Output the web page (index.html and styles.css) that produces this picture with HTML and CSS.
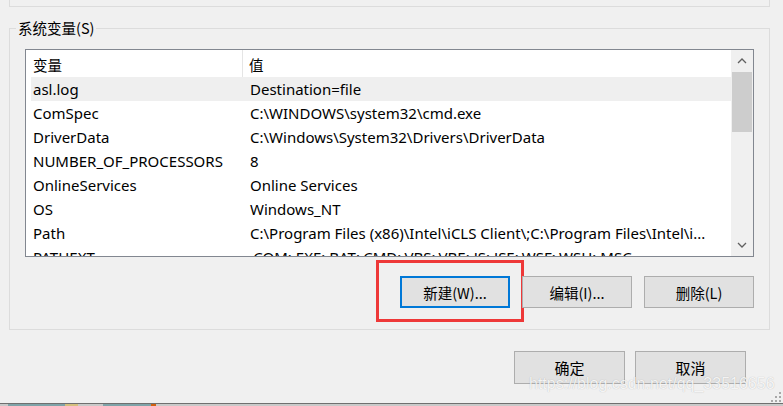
FILE: index.html
```html
<!DOCTYPE html>
<html>
<head>
<meta charset="utf-8">
<link rel="stylesheet" href="styles.css">
</head>
<body>
<div class="page">
  <div class="topbox"></div>
  <div class="group">
    <div class="legend">系统变量(S)</div>
    <div class="list">
      <div class="list-main">
        <div class="hdr"><div class="hc1">变量</div><div class="hc2">值</div></div>
        <div class="row sel"><div class="c1">asl.log</div><div class="c2">Destination=file</div></div>
        <div class="row"><div class="c1">ComSpec</div><div class="c2">C:\WINDOWS\system32\cmd.exe</div></div>
        <div class="row"><div class="c1">DriverData</div><div class="c2">C:\Windows\System32\Drivers\DriverData</div></div>
        <div class="row"><div class="c1">NUMBER_OF_PROCESSORS</div><div class="c2">8</div></div>
        <div class="row"><div class="c1">OnlineServices</div><div class="c2">Online Services</div></div>
        <div class="row"><div class="c1">OS</div><div class="c2">Windows_NT</div></div>
        <div class="row"><div class="c1">Path</div><div class="c2">C:\Program Files (x86)\Intel\iCLS Client\;C:\Program Files\Intel\i...</div></div>
        <div class="row"><div class="c1">PATHEXT</div><div class="c2">.COM;.EXE;.BAT;.CMD;.VBS;.VBE;.JS;.JSE;.WSF;.WSH;.MSC</div></div>
      </div>
      <div class="vscroll">
        <div class="sb-btn"><svg width="10" height="6" viewBox="0 0 10 6"><polyline points="1,5 5,1 9,5" fill="none" stroke="#606060" stroke-width="1.3"/></svg></div>
        <div class="thumb"></div>
        <div class="track"></div>
        <div class="sb-btn"><svg width="10" height="6" viewBox="0 0 10 6"><polyline points="1,1 5,5 9,1" fill="none" stroke="#606060" stroke-width="1.3"/></svg></div>
      </div>
    </div>
    <div class="btns">
      <div class="btn primary">新建(W)...<div class="annot"></div></div>
      <div class="btn">编辑(I)...</div>
      <div class="btn">删除(L)</div>
    </div>
  </div>
  <div class="dlg-btns">
    <div class="btn big">确定</div>
    <div class="btn big">取消</div>
  </div>
  <div class="watermark">https://blog.csdn.net/qq_33516656</div>
  <div class="grip"><svg width="12" height="10" viewBox="0 0 12 10">
    <rect x="9" y="0" width="2" height="2" fill="#a8a8a8"/>
    <rect x="5" y="4" width="2" height="2" fill="#a8a8a8"/>
    <rect x="9" y="4" width="2" height="2" fill="#a8a8a8"/>
    <rect x="1" y="8" width="2" height="2" fill="#a8a8a8"/>
    <rect x="5" y="8" width="2" height="2" fill="#a8a8a8"/>
    <rect x="9" y="8" width="2" height="2" fill="#a8a8a8"/>
  </svg></div>
  <div class="taskbar">
    <div class="tb tb1"></div><div class="tb tb2"></div><div class="tb tb3"></div><div class="tb tb4"></div><div class="tb tb5"></div>
  </div>
</div>
</body>
</html>
```
FILE: styles.css
```css
html, body {
  margin: 0;
  padding: 0;
  background: #f0f0f0;
}
.page {
  width: 783px;
  height: 406px;
  position: relative;
  overflow: hidden;
  display: flex;
  flex-direction: column;
  background: #f0f0f0;
  font-family: "Segoe UI", "Noto Sans", "Noto Sans CJK SC", sans-serif;
  font-size: 15px;
  color: #000;
}
.topbox {
  margin-left: 9px;
  width: 759px;
  height: 6px;
  border: 1px solid #dcdcdc;
  border-top: none;
  flex: none;
}
.group {
  margin: 21px 0 0 9px;
  width: 759px;
  height: 300px;
  border: 1px solid #dcdcdc;
  position: relative;
  flex: none;
}
.legend {
  position: absolute;
  left: 6px;
  top: -11px;
  padding: 0 2px;
  background: #f0f0f0;
  line-height: 20px;
  font-family: "Noto Sans CJK SC", sans-serif;
  font-size: 14.5px;
}
.list {
  margin: 20px 0 0 15px;
  width: 727px;
  height: 206px;
  border: 1px solid #828790;
  background: #fff;
  display: flex;
}
.list-main {
  flex: 1;
  overflow: hidden;
  background: #fff;
}
.hdr {
  height: 27px;
  display: flex;
  background: #fff;
}
.hc1 {
  width: 217px;
  padding: 2px 0 0 7px;
  box-sizing: border-box;
  border-right: 1px solid #e5e5e5;
  line-height: 25px;
  font-family: "Noto Sans CJK SC", sans-serif;
  font-size: 14.5px;
}
.hc2 {
  padding: 2px 0 0 6px;
  line-height: 25px;
  font-family: "Noto Sans CJK SC", sans-serif;
  font-size: 14.5px;
}
.row {
  margin-left: 5px;
  height: 24px;
  line-height: 24px;
  display: flex;
  white-space: nowrap;
}
.row.sel {
  background: #efefef;
}
.c1 {
  width: 217px;
  padding-left: 2px;
  box-sizing: border-box;
  flex: none;
}
.c2 {
  padding-left: 2px;
}
.vscroll {
  width: 22px;
  flex: none;
  display: flex;
  flex-direction: column;
  background: #f0f0f0;
}
.sb-btn {
  height: 22px;
  display: flex;
  align-items: center;
  justify-content: center;
  flex: none;
}
.thumb {
  margin: 0 1px;
  height: 60px;
  background: #cdcdcd;
  flex: none;
}
.track {
  flex: 1;
}
.btns {
  display: flex;
  justify-content: flex-end;
  gap: 12px;
  margin: 19px 15px 0 0;
}
.btn {
  width: 110px;
  height: 32px;
  box-sizing: border-box;
  border: 1px solid #adadad;
  background: #e1e1e1;
  display: flex;
  align-items: center;
  justify-content: center;
  font-family: "Noto Sans CJK SC", sans-serif;
  font-size: 14.5px;
  position: relative;
}
.btn.primary {
  border: 2px solid #0078d7;
}
.annot {
  position: absolute;
  left: -26px;
  top: -18px;
  width: 148px;
  height: 62px;
  border: 3px solid #ee3838;
  box-sizing: border-box;
}
.dlg-btns {
  display: flex;
  gap: 10px;
  margin: 21px 0 0 514px;
  flex: none;
}
.btn.big {
  width: 111px;
  height: 33px;
  font-size: 15px;
}
.watermark {
  position: absolute;
  left: 529px;
  top: 375px;
  font-family: "Liberation Sans", sans-serif;
  font-size: 16px;
  color: rgba(255, 255, 255, 0.85);
  text-shadow: 0 0 1px rgba(0, 0, 0, 0.25);
  white-space: nowrap;
}
.grip {
  position: absolute;
  right: 1px;
  top: 392px;
  line-height: 0;
}
.taskbar {
  margin-top: auto;
  height: 3px;
  border-top: 1px solid #6f6f6f;
  background: #c9c9c9;
  display: flex;
  box-sizing: border-box;
  flex: none;
}
.tb { height: 2px; }
.tb1 { margin-left: 8px; width: 57px; background: #7fa3a8; }
.tb2 { width: 13px; background: #d4bf7d; }
.tb3 { margin-left: 25px; width: 48px; background: #7fa3a8; }
.tb4 { width: 5px; background: #d06010; }
.tb5 { flex: 1; }
```
